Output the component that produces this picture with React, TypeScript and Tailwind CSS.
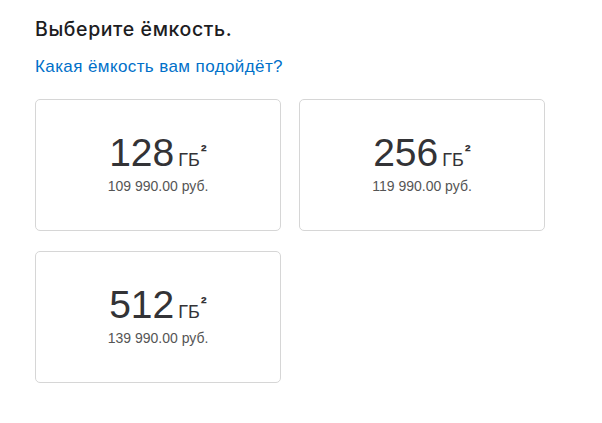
const options = [
  { size: "128", price: "109 990.00 руб." },
  { size: "256", price: "119 990.00 руб." },
  { size: "512", price: "139 990.00 руб." },
];

export default function App() {
  return (
    <div
      className="w-[602px] h-[423px] bg-white pl-[35px] pt-[16px]"
      style={{ fontFamily: '"Liberation Sans", Arial, sans-serif' }}
    >
      <h2
        className="text-[19.5px] leading-[26px] font-medium tracking-[0.6px] text-[#1d1d1f]"
        style={{ fontFamily: 'Inter, "Liberation Sans", sans-serif' }}
      >
        Выберите ёмкость.
      </h2>
      <a className="block mt-[15px] text-[17px] leading-[20px] tracking-[0.4px] text-[#0070c9]">
        Какая ёмкость вам подойдёт?
      </a>

      <div className="grid grid-cols-[246px_246px] gap-x-[18px] gap-y-[20px] mt-[22px]">
        {options.map((opt) => (
          <div
            key={opt.size}
            className="h-[132px] rounded-[5px] border border-[#d6d6d6] flex flex-col items-center justify-center"
          >
            <div className="flex items-baseline text-[#333336]">
              <span className="text-[39px] leading-[44px]">{opt.size}</span>
              <span className="text-[18px] ml-[4px]">ГБ</span>
              <span className="text-[18px] leading-none font-bold ml-[1px] relative top-[-9px]">²</span>
            </div>
            <div className="text-[14px] leading-[18px] text-[#555] mt-[2px] mb-[4px]">{opt.price}</div>
          </div>
        ))}
      </div>
    </div>
  );
}
